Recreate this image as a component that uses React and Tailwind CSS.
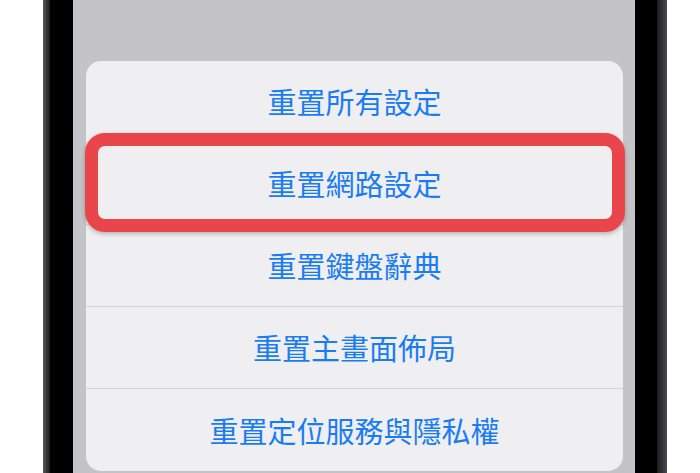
import React from "react";

const options = [
  "重置所有設定",
  "重置網路設定",
  "重置鍵盤辭典",
  "重置主畫面佈局",
  "重置定位服務與隱私權",
];

const App = () => {
  return (
    <div
      className="flex h-[473px] w-[700px] overflow-hidden bg-white"
      style={{ fontFamily: '"Noto Sans CJK TC", "Noto Sans CJK SC", sans-serif' }}
    >
      {/* left bezel */}
      <div className="w-[43px] shrink-0 bg-white" />
      <div className="w-[7px] shrink-0 bg-gradient-to-r from-[#5a5a5e] to-[#1c1c1e]" />
      <div className="w-[23px] shrink-0 bg-black" />

      {/* screen */}
      <div className="w-[562px] shrink-0 bg-[#c4c4c8] pl-[13px] pr-[12px] pt-[61px]">
        <div className="relative">
          <div className="overflow-hidden rounded-[15px] bg-[#efeff1]">
            {options.map((label, i) => (
              <div
                key={label}
                className={
                  i < options.length - 1
                    ? "flex h-[82px] items-center justify-center border-b border-[#d5d5d9]"
                    : "flex h-[82px] items-center justify-center"
                }
              >
                <span className="text-[29px] leading-none text-[#1a7cf3]">
                  {label}
                </span>
              </div>
            ))}
          </div>
          {/* highlight around the second row */}
          <div className="pointer-events-none absolute left-[-1px] top-[72px] h-[99px] w-[540px] rounded-[20px] border-[13px] border-[#e9464b] shadow-[0_2px_4px_rgba(0,0,0,0.25)]" />
        </div>
      </div>

      {/* right bezel */}
      <div className="w-[22px] shrink-0 bg-black" />
      <div className="w-[10px] shrink-0 bg-gradient-to-r from-[#1c1c1e] to-[#4a4a4e]" />
      <div className="flex-1 bg-white" />
    </div>
  );
};

export default App;
